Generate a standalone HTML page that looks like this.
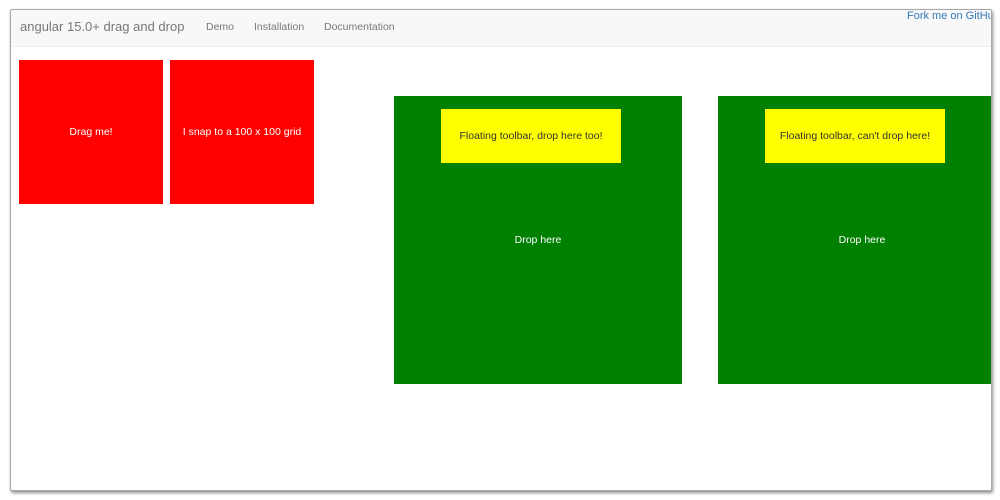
<!DOCTYPE html>
<html><head><style>
body{margin:0;width:1000px;height:500px;background:#fff;font-family:"Liberation Sans",Arial,sans-serif;position:relative;overflow:hidden}
.frame{position:absolute;left:10px;top:9px;width:980px;height:480px;border:1px solid #a8a8a8;box-shadow:1px 2px 3px rgba(0,0,0,.45);border-radius:2px;overflow:hidden;background:#fff}
.nav{position:absolute;left:0;top:0;width:980px;height:36px;background:#f8f8f8;border-bottom:1px solid #eee}
.nav span{position:absolute;top:11px;color:#777;font-size:10.5px;white-space:nowrap}
.nav .brand{font-size:13px;top:9px;color:#777}
.nav .fork{top:0;color:#337ab7;font-size:11px}
.b{position:absolute;display:flex;align-items:center;justify-content:center;font-size:10.5px}
.r{background:#f00;color:#fff;width:144px;height:144px;top:50px}
.g{background:#008000;color:#fff;width:288px;height:288px;top:86px}
.y{background:#ff0;color:#333;width:180px;height:54px;top:99px}
</style></head><body>
<div class="frame">
<div class="nav">
<span class="brand" style="left:9px">angular 15.0+ drag and drop</span>
<span style="left:195px">Demo</span>
<span style="left:243px">Installation</span>
<span style="left:313px">Documentation</span>
<span class="fork" style="left:896px">Fork me on GitHub</span>
</div>
<div class="b r" style="left:8px">Drag me!</div>
<div class="b r" style="left:159px">I snap to a 100 x 100 grid</div>
<div class="b g" style="left:383px">Drop here</div>
<div class="b g" style="left:707px">Drop here</div>
<div class="b y" style="left:430px">Floating toolbar, drop here too!</div>
<div class="b y" style="left:754px">Floating toolbar, can't drop here!</div>
</div>
</body></html>
